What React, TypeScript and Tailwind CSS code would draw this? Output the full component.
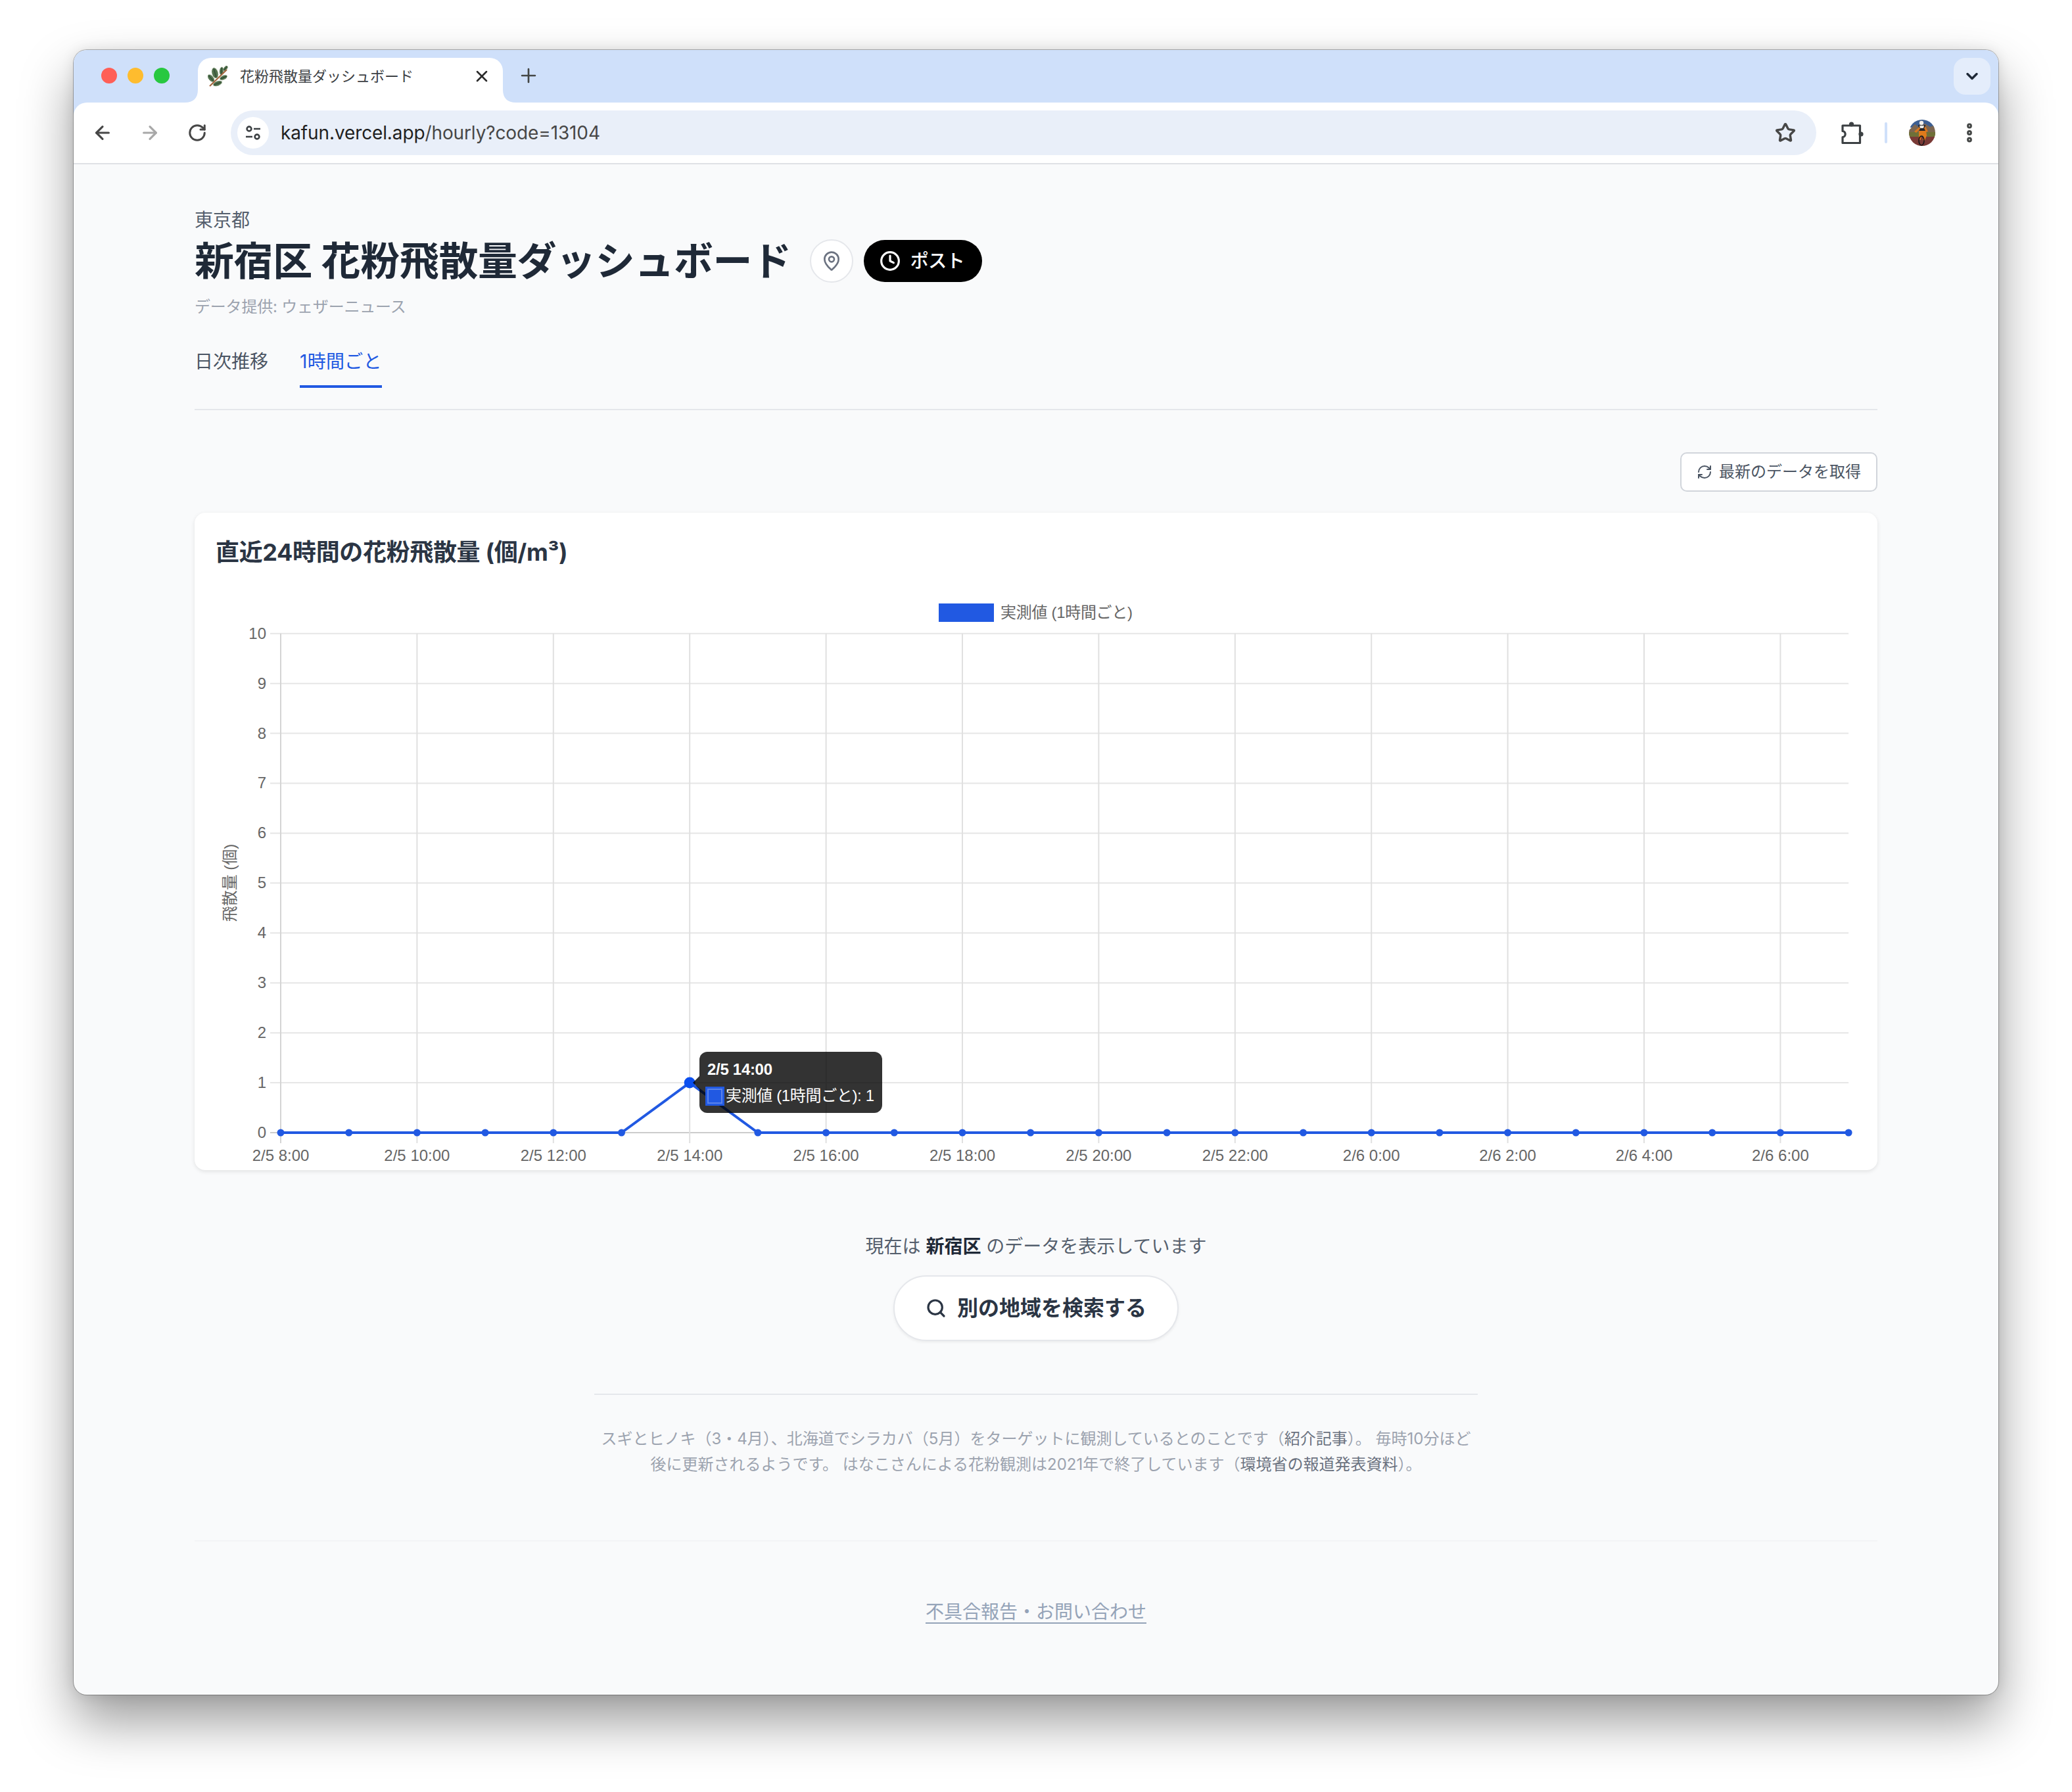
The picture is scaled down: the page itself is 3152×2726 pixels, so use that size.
import { ArrowLeft, ArrowRight, ChevronDown, Clock, MapPin, MoreVertical, Plus, RefreshCw, RotateCw, Search, Star, X } from "lucide-react";

// 24 hourly points, 2/5 8:00 -> 2/6 7:00
const points = Array.from({ length: 24 }, (_, i) => (i === 6 ? 1 : 0));
const xLabels = ["2/5 8:00", "2/5 10:00", "2/5 12:00", "2/5 14:00", "2/5 16:00", "2/5 18:00", "2/5 20:00", "2/5 22:00", "2/6 0:00", "2/6 2:00", "2/6 4:00", "2/6 6:00"];
const yTicks = [0, 1, 2, 3, 4, 5, 6, 7, 8, 9, 10];

const X0 = 99;
const STEP = 103.7;
const Y0 = 823;
const YSTEP = 75.93;
const BLUE = "#2159e2";
const px = (i: number) => X0 + i * STEP;
const py = (v: number) => Y0 - v * YSTEP;

// sprig tufts: cx, cy, rx, ry, angle
const tufts = [
  [11, 11, 4.5, 8, -15],
  [5, 19, 3.6, 6.5, -40],
  [15, 27, 3.4, 7, 70],
  [24, 18, 3, 6, 65],
  [21, 8, 3, 6, 5],
  [27, 4, 2.4, 4.5, 40],
];

function Favicon() {
  return (
    <svg width="32" height="32" viewBox="0 0 32 32" className="shrink-0">
      {tufts.map(([cx, cy, rx, ry, a], i) => (
        <g key={i} transform={`rotate(${a} ${cx} ${cy})`}>
          <ellipse cx={cx} cy={cy} rx={rx} ry={ry} fill="#4f6f4c" />
          <ellipse cx={cx} cy={cy} rx={rx} ry={ry} fill="none" stroke="#a9b89a" strokeWidth="1.2" strokeDasharray="1 2" />
          <path d={`M${cx} ${cy - ry + 1} V${cy + ry - 1}`} stroke="#2f4a33" strokeWidth="1.2" />
        </g>
      ))}
      <path d="M3 31 L29 6" stroke="#a4673f" strokeWidth="2.2" fill="none" />
    </svg>
  );
}

function TuneIcon() {
  return (
    <svg width="28" height="28" viewBox="0 0 28 28" fill="none" stroke="#3c4043" strokeWidth="2.6">
      <circle cx="8" cy="8" r="3.4" />
      <path d="M15 8 H25" />
      <path d="M3 20 H13" />
      <circle cx="20" cy="20" r="3.4" />
    </svg>
  );
}

function PuzzleIcon() {
  return (
    <svg width="34" height="36" viewBox="0 0 34 36" fill="#3c4043" stroke="#3c4043" strokeLinejoin="round">
      <circle cx="15.5" cy="5" r="3.6" stroke="none" />
      <circle cx="30" cy="20" r="3.6" stroke="none" />
      <path d="M2 7 V15.5 C7.5 15.5 7.5 24.5 2 24.5 V33.5 H28.5 V7 Z" fill="none" strokeWidth="3.2" />
    </svg>
  );
}

function Avatar() {
  return (
    <svg width="40" height="40" viewBox="0 0 40 40" className="shrink-0">
      <defs>
        <clipPath id="avatar-clip">
          <circle cx="20" cy="20" r="20" />
        </clipPath>
      </defs>
      <g clipPath="url(#avatar-clip)">
        <rect width="40" height="12" fill="#3d5f92" />
        <path d="M0 16 L9 7 L16 12 L24 6 L32 11 L40 8 V24 H0 Z" fill="#7c6650" />
        <rect y="19" width="40" height="8" fill="#6f7038" />
        <rect y="26" width="40" height="14" fill="#7a3a36" />
        <path d="M14 8 H25 L25 18 H16 Z" fill="#26262a" />
        <path d="M16 9 H23 L22 13 H17 Z" fill="#e8e6e0" />
        <circle cx="19" cy="5" r="3.2" fill="#f1efe9" />
        <path d="M8 18 L16 11 L17 14 L11 20 Z" fill="#d8761f" />
        <path d="M25 10 L29 18 L26 19 L23 13 Z" fill="#d8761f" />
        <path d="M15 17 H26 L27 24 L24 32 L21 31 L22 25 L19 24 L18 31 L15 30 Z" fill="#e07a1c" />
        <ellipse cx="19" cy="32" rx="4" ry="7" fill="none" stroke="#17171a" strokeWidth="1.6" />
      </g>
    </svg>
  );
}

function BrowserChrome() {
  return (
    <div className="bg-[#cfe0fa] shrink-0">
      <div className="h-[80px] flex items-end pl-[42px]">
        <div className="flex gap-[16px] h-[80px] items-center -translate-y-[1px]">
          <span className="w-[24px] h-[24px] rounded-full bg-[#ff5f57]" />
          <span className="w-[24px] h-[24px] rounded-full bg-[#febc2e]" />
          <span className="w-[24px] h-[24px] rounded-full bg-[#28c840]" />
        </div>
        <div className="relative ml-[43px] w-[464px] h-[68px] bg-white rounded-t-[20px] flex items-center pl-[15px] pr-[18px] pb-[12px]">
          <svg width="20" height="20" viewBox="0 0 20 20" className="absolute -left-[20px] bottom-0">
            <path d="M20 0 V20 H0 Q20 20 20 0 Z" fill="#ffffff" />
          </svg>
          <svg width="20" height="20" viewBox="0 0 20 20" className="absolute -right-[20px] bottom-0">
            <path d="M0 0 V20 H20 Q0 20 0 0 Z" fill="#ffffff" />
          </svg>
          <Favicon />
          <span className="ml-[17px] flex-1 text-[22px] leading-[32px] text-[#3c4043] whitespace-nowrap">花粉飛散量ダッシュボード</span>
          <X size={28} strokeWidth={2.2} className="text-[#2b2b2b]" />
        </div>
        <div className="ml-[22px] h-[80px] flex items-center -translate-y-[1px]">
          <Plus size={34} strokeWidth={1.9} className="text-[#444746]" />
        </div>
        <div className="ml-auto mr-[12px] mb-[12px] w-[56px] h-[56px] rounded-[18px] bg-[#e4edfb] flex items-center justify-center">
          <ChevronDown size={28} strokeWidth={3} className="text-[#1f2937]" />
        </div>
      </div>
      <div className="h-[94px] bg-white rounded-t-[20px] border-b-2 border-[#dfe1e5] flex items-center pl-[28px]">
        <ArrowLeft size={32} strokeWidth={2.4} className="text-[#474747]" />
        <ArrowRight size={32} strokeWidth={2.4} className="ml-[40px] text-[#a8a8a8]" />
        <RotateCw size={30} strokeWidth={2.4} className="ml-[41px] text-[#474747]" />
        <div className="ml-[36px] w-[2412px] h-[68px] rounded-full bg-[#e9eff9] flex items-center pl-[10px] pr-[31px]">
          <div className="w-[48px] h-[48px] rounded-full bg-white flex items-center justify-center">
            <TuneIcon />
          </div>
          <span className="ml-[18px] text-[28px] leading-[40px] tracking-[-0.12px] text-[#1f1f1f] whitespace-nowrap">
            kafun.vercel.app<span className="text-[#474747]">/hourly?code=13104</span>
          </span>
          <Star size={32} strokeWidth={2.6} className="ml-auto text-[#474747]" />
        </div>
        <div className="ml-[38px]">
          <PuzzleIcon />
        </div>
        <span className="ml-[32px] w-[4px] h-[32px] rounded-full bg-[#cfe0fa]" />
        <div className="ml-[33px]">
          <Avatar />
        </div>
        <MoreVertical size={36} strokeWidth={3.2} className="ml-[34px] text-[#444746]" />
      </div>
    </div>
  );
}

function PollenChart() {
  return (
    <div className="relative mt-[32px] h-[880px]">
      <svg width="2496" height="880" viewBox="0 0 2496 880" className="block font-['Liberation_Sans','Noto_Sans_CJK_JP',sans-serif]">
        {/* legend */}
        <rect x="1100" y="18" width="84" height="28" fill={BLUE} />
        <text x="1194" y="40" fontSize="24" fill="#666666" letterSpacing="-0.3">実測値 (1時間ごと)</text>

        {/* grid */}
        {yTicks.map((v) => (
          <line key={v} x1={X0 - 16} x2={px(23)} y1={py(v)} y2={py(v)} stroke={v === 0 ? "#cccccc" : "#e6e6e6"} strokeWidth="2" />
        ))}
        {xLabels.map((_, i) => (
          <line key={i} x1={px(i * 2)} x2={px(i * 2)} y1={py(10)} y2={Y0 + 16} stroke={i === 0 ? "#d4d4d4" : "#e0e0e0"} strokeWidth="2" />
        ))}

        {/* axis labels */}
        {yTicks.map((v) => (
          <text key={v} x={X0 - 22} y={py(v) + 8} fontSize="24" fill="#666666" textAnchor="end">{v}</text>
        ))}
        {xLabels.map((label, i) => (
          <text key={label} x={px(i * 2)} y={866} fontSize="24" fill="#666666" textAnchor="middle">{label}</text>
        ))}
        <text transform="translate(30 443) rotate(-90)" fontSize="24" fill="#666666" textAnchor="middle">飛散量 (個)</text>

        {/* series */}
        <polyline points={points.map((v, i) => `${px(i)},${py(v)}`).join(" ")} fill="none" stroke={BLUE} strokeWidth="4" />
        {points.map((v, i) => (
          <circle key={i} cx={px(i)} cy={py(v)} r={i === 6 ? 8.5 : 5.5} fill={i === 6 ? "#0b4ff0" : BLUE} />
        ))}
      </svg>

      {/* tooltip sits over the line */}
      <div className="absolute left-[736px] top-[700px] w-[278px] h-[93px] rounded-[12px] bg-black/80 text-white font-['Liberation_Sans','Noto_Sans_CJK_JP',sans-serif] text-[24px]">
        <div className="absolute -left-[10px] top-[37px] w-[10px] h-[20px] bg-black/80 [clip-path:polygon(0_50%,100%_0,100%_100%)]" />
        <div className="absolute left-[12px] top-[13px] leading-[28px] font-bold tracking-[-0.3px] whitespace-nowrap">2/5 14:00</div>
        <div className="absolute left-[9px] top-[53px] w-[29px] h-[29px] bg-[#2159e2] p-[3px]">
          <div className="w-full h-full border-2 border-[#5a83ea]" />
        </div>
        <div className="absolute left-[40px] top-[53px] leading-[28px] tracking-[-0.36px] whitespace-nowrap">実測値 (1時間ごと): 1</div>
      </div>
    </div>
  );
}

export default function App() {
  return (
    <div className="w-[3152px] h-[2726px] bg-white pt-[76px] pl-[112px] overflow-hidden font-['Inter','Noto_Sans_CJK_JP',sans-serif]">
      <div className="w-[2928px] h-[2502px] rounded-[20px] overflow-hidden bg-[#f9fafb] flex flex-col shadow-[0_0_0_1px_rgba(0,0,0,0.28),0_0_20px_rgba(0,0,0,0.1),0_40px_80px_rgba(0,0,0,0.4)]">
        <BrowserChrome />

        <main className="w-[2560px] mx-auto">
          <p className="mt-[65px] text-[28px] leading-[40px] text-[#555f6d]">東京都</p>

          <div className="mt-[8px] flex items-center h-[68px]">
            <h1 className="text-[60px] leading-[68px] font-bold tracking-[-0.4px] text-[#1f2937] whitespace-nowrap">新宿区 花粉飛散量ダッシュボード</h1>
            <button className="ml-[28px] w-[66px] h-[66px] rounded-full bg-white border-2 border-[#e5e7eb] flex items-center justify-center">
              <MapPin size={32} strokeWidth={2} className="text-[#6b7280]" />
            </button>
            <button className="ml-[16px] w-[180px] h-[64px] rounded-full bg-black text-white flex items-center pl-[24px]">
              <Clock size={32} strokeWidth={2.4} />
              <span className="ml-[15px] text-[28px] leading-[40px] tracking-[-0.5px] font-medium">ポスト</span>
            </button>
          </div>

          <p className="mt-[20px] text-[24px] leading-[32px] tracking-[-0.2px] text-[#9ca3af]">データ提供: ウェザーニュース</p>

          <nav className="mt-[47px] pb-[32px] border-b-2 border-[#e5e7eb] flex gap-[48px]">
            <a className="block h-[60px] text-[28px] leading-[40px] text-[#4b5563]">日次推移</a>
            <a className="block h-[60px] text-[28px] leading-[40px] tracking-[0.3px] text-[#2159e2] border-b-4 border-[#2159e2]">1時間ごと</a>
          </nav>

          <div className="mt-[64px] flex justify-end">
            <button className="w-[300px] h-[60px] rounded-[10px] bg-white border-2 border-[#d1d5db] flex items-center justify-center gap-[10px] text-[24px] text-[#4b5563]">
              <RefreshCw size={24} strokeWidth={2} />
              最新のデータを取得
            </button>
          </div>

          <section className="mt-[32px] rounded-[16px] bg-white px-[32px] pt-[32px] shadow-[0_2px_6px_rgba(0,0,0,0.1)]">
            <h2 className="text-[36px] leading-[56px] font-bold tracking-[-0.35px] text-[#2b3544]">直近24時間の花粉飛散量 (個/m³)</h2>
            <PollenChart />
          </section>

          <p className="mt-[96px] text-center text-[28px] leading-[40px] text-[#555f6d]">
            現在は <strong className="font-bold text-[#1f2937]">新宿区</strong> のデータを表示しています
          </p>

          <div className="mt-[24px] flex justify-center">
            <button className="w-[434px] h-[100px] rounded-full bg-white border-2 border-[#e5e7eb] shadow-[0_2px_4px_rgba(0,0,0,0.06)] flex items-center justify-center gap-[16px] text-[32px] font-bold text-[#2b3544]">
              <Search size={32} strokeWidth={2.4} />
              別の地域を検索する
            </button>
          </div>

          <div className="mt-[80px] mx-auto w-[1344px] border-t-2 border-[#e5e7eb] pt-[47px] text-center text-[24px] leading-[39px] text-[#9ca3af]">
            スギとヒノキ（3・4月）、北海道でシラカバ（5月）をターゲットに観測しているとのことです（<a className="text-[#6b7280]">紹介記事</a>）。 毎時10分ほど<br />
            後に更新されるようです。 はなこさんによる花粉観測は2021年で終了しています（<a className="text-[#6b7280]">環境省の報道発表資料</a>）。
          </div>

          <footer className="mt-[96px] border-t-2 border-[#f3f4f6] pt-[87px] text-center">
            <a className="text-[28px] leading-[40px] text-[#94a3b8] underline underline-offset-[6px]">不具合報告・お問い合わせ</a>
          </footer>
        </main>
      </div>
    </div>
  );
}
